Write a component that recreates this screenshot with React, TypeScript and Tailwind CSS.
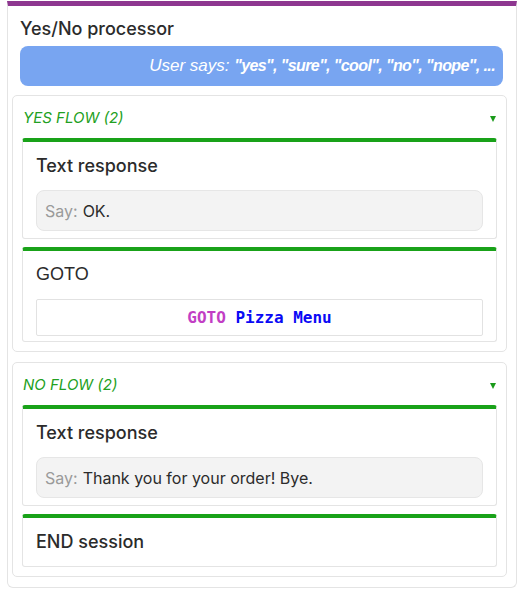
import React from "react";

const SANS = "font-['Inter','Noto_Sans',sans-serif]";

function InnerCard({ children, className = "" }: { children: React.ReactNode; className?: string }) {
  return (
    <div className={`rounded-[3px] border border-[#e4e4e4] border-t-[4px] border-t-[#19a219] bg-white px-[13px] ${className}`}>
      {children}
    </div>
  );
}

function Heading({ children, arial = false }: { children: React.ReactNode; arial?: boolean }) {
  return (
    <div
      className={`h-[24px] text-[18px] leading-[24px] text-[#2b2b2b] ${
        arial ? "font-['Liberation_Sans',Arial,sans-serif] font-normal" : `${SANS} font-medium`
      }`}
    >
      {children}
    </div>
  );
}

function SayBox({ text }: { text: string }) {
  return (
    <div className={`mt-[12px] flex h-[41px] items-center rounded-[8px] border border-[#e6e6e6] bg-[#f3f3f3] px-[8px] text-[16px] ${SANS}`}>
      <span className="text-[#9a9a9a]">Say:</span>
      <span className="ml-[5px] text-[#2b2b2b]">{text}</span>
    </div>
  );
}

function FlowHeader({ label }: { label: string }) {
  return (
    <div className="flex h-[42px] items-center justify-between pl-[1px] pr-[1px] pt-[2px]">
      <span className={`${SANS} text-[15px] italic text-[#22a022]`}>{label}</span>
      <span className="mt-[1px] h-0 w-0 border-x-[3.5px] border-t-[6px] border-x-transparent border-t-[#1a9a1a]" />
    </div>
  );
}

export default function App() {
  return (
    <div className="min-h-[595px] w-[526px] bg-white pt-[1px]">
      <div className="ml-[7px] w-[510px] rounded-b-[6px] border border-t-[5px] border-[#e4e4e4] border-t-[#8e3790] pb-[10px] pl-[4px] pr-[9px]">
        <div className={`ml-[8px] mt-[11px] h-[24px] text-[18px] font-medium leading-[24px] text-[#2b2b2b] ${SANS}`}>
          Yes/No processor
        </div>
        <div className="ml-[8px] mr-[4px] mt-[5px] flex h-[40px] items-center justify-end rounded-[8px] bg-[#78a5f1] pr-[8px] font-['Liberation_Sans',Arial,sans-serif] italic text-white">
          <span className="text-[17px]">User says:&nbsp;</span>
          <span className="text-[16px] font-bold tracking-[-0.6px]">"yes", "sure", "cool", "no", "nope", ...</span>
        </div>

        <div className="mt-[9px] rounded-[5px] border border-[#e4e4e4] bg-white px-[9px] pb-[9px]">
          <FlowHeader label="YES FLOW (2)" />
          <InnerCard className="pb-[7px] pt-[12px]">
            <Heading>Text response</Heading>
            <SayBox text="OK." />
          </InnerCard>
          <InnerCard className="mt-[8px] pb-[5px] pt-[11px]">
            <Heading arial>GOTO</Heading>
            <div className="mt-[13px] flex h-[37px] items-center justify-center rounded-[2px] border border-[#e2e2e2] bg-white font-['DejaVu_Sans_Mono','Liberation_Mono',monospace] text-[16px] font-bold">
              <span className="text-[#c23ec4]">GOTO</span>
              <span className="text-[#0a0af5]">&nbsp;Pizza Menu</span>
            </div>
          </InnerCard>
        </div>

        <div className="mt-[10px] rounded-[5px] border border-[#e4e4e4] bg-white px-[9px] pb-[9px]">
          <FlowHeader label="NO FLOW (2)" />
          <InnerCard className="pb-[7px] pt-[12px]">
            <Heading>Text response</Heading>
            <SayBox text="Thank you for your order! Bye." />
          </InnerCard>
          <InnerCard className="mt-[8px] pb-[12px] pt-[12px]">
            <Heading>END session</Heading>
          </InnerCard>
        </div>
      </div>
    </div>
  );
}
